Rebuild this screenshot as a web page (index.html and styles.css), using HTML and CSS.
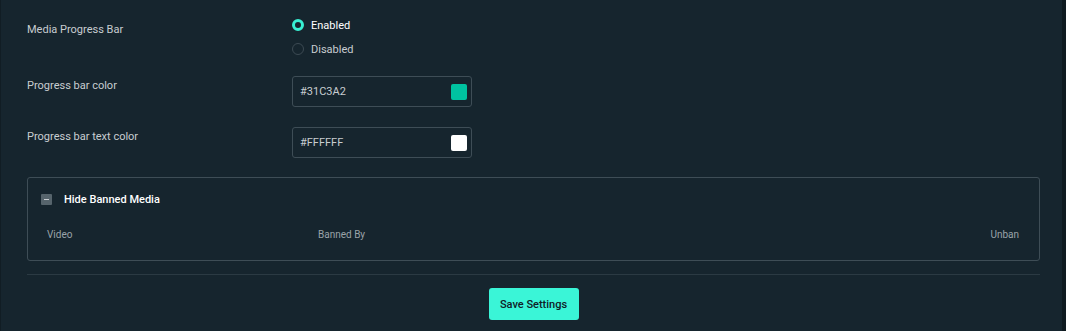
FILE: index.html
```html
<!DOCTYPE html>
<html lang="en">
<head>
  <meta charset="UTF-8">
  <title>Media Settings</title>
  <link rel="stylesheet" href="styles.css">
</head>
<body>
  <div class="settings-panel">

    <div class="setting-row row-radio">
      <div class="setting-label">Media Progress Bar</div>
      <div class="setting-control">
        <label class="radio-option"><span class="radio checked"></span>Enabled</label>
        <label class="radio-option"><span class="radio"></span>Disabled</label>
      </div>
    </div>

    <div class="setting-row">
      <div class="setting-label">Progress bar color</div>
      <div class="setting-control">
        <div class="color-input">
          <span>#31C3A2</span>
          <span class="swatch swatch-teal"></span>
        </div>
      </div>
    </div>

    <div class="setting-row row-last">
      <div class="setting-label">Progress bar text color</div>
      <div class="setting-control">
        <div class="color-input">
          <span>#FFFFFF</span>
          <span class="swatch swatch-white"></span>
        </div>
      </div>
    </div>

    <!-- Banned media list -->
    <div class="banned-box">
      <div class="banned-header">
        <span class="collapse-box"></span>
        <strong>Hide Banned Media</strong>
      </div>
      <div class="banned-table">
        <span class="col-video">Video</span>
        <span class="col-by">Banned By</span>
        <span class="col-unban">Unban</span>
      </div>
    </div>

    <div class="form-footer">
      <button class="save-button">Save Settings</button>
    </div>
  </div>
  <div class="scroll-edge"></div>
</body>
</html>
```

FILE: styles.css
```css
body {
  margin: 0;
  background-color: #16252e;
  font-family: Roboto, "Liberation Sans", sans-serif;
  font-size: 11px;
  color: #c8cdd1;
  display: flex;
  height: 331px;
  overflow: hidden;
}

.settings-panel {
  flex: 1;
  padding: 0 22px 0 27px;
  box-shadow: inset 1px 0 0 #111d24;
}

.scroll-edge {
  width: 4px;
  background-color: #0f1a20;
}

.setting-row {
  display: flex;
  height: 51px;
}

.row-radio {
  height: 76px;
}

.row-last {
  height: 50px;
}

.setting-label {
  width: 265px;
  padding-top: 3px;
  line-height: 13px;
}

.row-radio .setting-label {
  padding-top: 23px;
}

.setting-control {
  display: flex;
  flex-direction: column;
}

.row-radio .setting-control {
  padding-top: 18px;
  gap: 10px;
}

.radio-option {
  display: flex;
  align-items: center;
  gap: 7px;
  height: 14px;
  color: #c8cdd1;
}

.radio-option:first-child {
  color: #ffffff;
}

.radio {
  width: 12px;
  height: 12px;
  border-radius: 50%;
  border: 1px solid #3c4a53;
  box-sizing: border-box;
}

.radio.checked {
  border: 3px solid #38f0d3;
}

.color-input {
  width: 180px;
  height: 31px;
  box-sizing: border-box;
  border: 1px solid #3e4d56;
  border-radius: 3px;
  display: flex;
  align-items: center;
  justify-content: space-between;
  padding: 0 4px 0 7px;
  color: #c8cdd1;
}

.swatch {
  width: 16px;
  height: 16px;
  border-radius: 2px;
}

.swatch-teal {
  background-color: #00c3a1;
}

.swatch-white {
  background-color: #ffffff;
}

.banned-box {
  border: 1px solid #3e4d56;
  border-radius: 3px;
  height: 84px;
  box-sizing: border-box;
  padding: 0 20px 0 13px;
}

.banned-header {
  display: flex;
  align-items: center;
  gap: 12px;
  height: 43px;
  color: #ffffff;
}

.banned-header strong {
  font-weight: 500;
}

.collapse-box {
  width: 11px;
  height: 11px;
  background-color: #56646c;
  border-radius: 1px;
  position: relative;
}

.collapse-box::after {
  content: "";
  position: absolute;
  left: 3px;
  top: 5px;
  width: 5px;
  height: 1px;
  background-color: #c8cdd1;
}

.banned-table {
  display: flex;
  padding-left: 6px;
  padding-top: 2px;
  height: 23px;
  align-items: center;
  font-size: 10px;
  color: #9aa3a9;
}

.col-video {
  width: 271px;
}

.col-by {
  flex: 1;
}

.form-footer {
  margin-top: 13px;
  border-top: 1px solid #2b3a43;
  display: flex;
  justify-content: center;
  padding-top: 13px;
}

.save-button {
  background-color: #3af5d7;
  color: #102027;
  font-family: Roboto, "Liberation Sans", sans-serif;
  font-size: 11px;
  font-weight: 500;
  border: none;
  border-radius: 3px;
  width: 90px;
  height: 32px;
  cursor: pointer;
}
```
